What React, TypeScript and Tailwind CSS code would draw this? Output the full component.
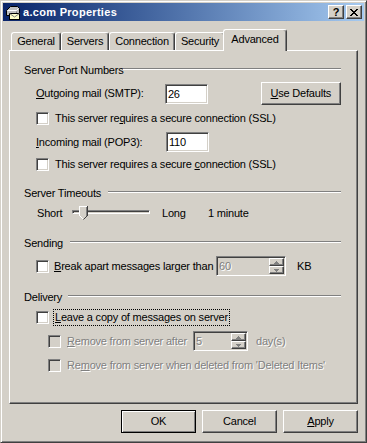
import React from 'react';

const raised =
  'border border-t-white border-l-white border-r-[#404040] border-b-[#404040] shadow-[inset_-1px_-1px_#808080]';
const sunken =
  'border border-t-[#808080] border-l-[#808080] border-r-white border-b-white shadow-[inset_1px_1px_#404040,inset_-1px_-1px_#d4d0c8]';
const grayText = 'text-[#808080] [text-shadow:1px_1px_0_#fff]';

function Key({ children }: { children: React.ReactNode }) {
  return <span className="underline underline-offset-[1px]">{children}</span>;
}

function MailIcon() {
  return (
    <svg width="16" height="16" viewBox="0 0 16 16" className="shrink-0">
      <path d="M1.5 6.5 L5.5 2.5 H12.5 L14.5 4.5 V9.5 L11.5 11.5 H1.5 Z" fill="#c0c0c0" stroke="#000" />
      <path d="M2.5 6.5 H11.5 L13.5 4.5" fill="none" stroke="#fff" />
      <path d="M11.5 7.5 V10.5" fill="none" stroke="#808080" />
      <rect x="4.5" y="9.5" width="10" height="6" fill="#ffffc8" stroke="#000" />
      <path d="M4.5 9.5 L9.5 13 L14.5 9.5" fill="none" stroke="#808080" />
    </svg>
  );
}

function TitleBtn({ children }: { children: React.ReactNode }) {
  return (
    <div className={`w-[16px] h-[14px] bg-[#d4d0c8] flex items-center justify-center ${raised}`}>
      {children}
    </div>
  );
}

function Check({ disabled }: { disabled?: boolean }) {
  return (
    <span
      className={`block w-[13px] h-[13px] shrink-0 ${sunken} ${disabled ? 'bg-[#d4d0c8]' : 'bg-white'}`}
    />
  );
}

function Edit({ value, className = '' }: { value: string; className?: string }) {
  return (
    <div className={`w-[43px] h-[20px] bg-white pl-[2px] flex items-center ${sunken} ${className}`}>
      {value}
    </div>
  );
}

function SpinBtn({ up }: { up?: boolean }) {
  return (
    <div className={`flex-1 bg-[#d4d0c8] flex items-center justify-center ${raised}`}>
      <svg width="5" height="3" viewBox="0 0 5 3" shapeRendering="crispEdges">
        {up ? (
          <>
            <rect x="2" y="0" width="1" height="1" fill="#808080" />
            <rect x="1" y="1" width="3" height="1" fill="#808080" />
            <rect x="0" y="2" width="5" height="1" fill="#808080" />
          </>
        ) : (
          <>
            <rect x="0" y="0" width="5" height="1" fill="#808080" />
            <rect x="1" y="1" width="3" height="1" fill="#808080" />
            <rect x="2" y="2" width="1" height="1" fill="#808080" />
          </>
        )}
      </svg>
    </div>
  );
}

function Spin({ value, w }: { value: string; w: string }) {
  return (
    <div className={`${w} h-[20px] flex bg-[#d4d0c8] p-[1px] ${sunken}`}>
      <span className={`flex-1 pl-[1px] flex items-center ${grayText}`}>{value}</span>
      <div className="w-[15px] flex flex-col">
        <SpinBtn up />
        <SpinBtn />
      </div>
    </div>
  );
}

function Group({ label, w }: { label: string; w: string }) {
  return (
    <div className="flex items-center h-[14px]">
      <span className={`${w} shrink-0 whitespace-nowrap`}>{label}</span>
      <div className="flex-1 h-[2px] mb-[2px] border-t border-t-[#808080] border-b border-b-white" />
    </div>
  );
}

function Tab({ label, w, active }: { label: string; w: string; active?: boolean }) {
  if (active) {
    return (
      <div
        className={`${w} h-[22px] -mb-[1px] -ml-[2px] relative z-10 bg-[#d4d0c8] border-t border-l border-r border-t-white border-l-white border-r-[#404040] shadow-[inset_-1px_0_#808080] rounded-t-[3px] flex items-center justify-center pb-[3px]`}
      >
        {label}
      </div>
    );
  }
  return (
    <div
      className={`${w} h-[18px] bg-[#d4d0c8] border-t border-l border-r border-t-white border-l-white border-r-[#404040] shadow-[inset_-1px_0_#808080] rounded-t-[3px] flex items-center justify-center`}
    >
      {label}
    </div>
  );
}

function Button({ children, primary }: { children: React.ReactNode; primary?: boolean }) {
  return (
    <div
      className={`w-[75px] h-[23px] bg-[#d4d0c8] flex items-center justify-center ${
        primary ? 'border border-black shadow-[inset_1px_1px_#fff,inset_-1px_-1px_#808080]' : raised
      }`}
    >
      {children}
    </div>
  );
}

export default function App() {
  return (
    <div className="w-[367px] h-[443px] bg-[#d4d0c8] border border-t-[#d4d0c8] border-l-[#d4d0c8] border-r-[#404040] border-b-[#404040] shadow-[inset_1px_1px_#fff,inset_-1px_-1px_#808080] p-[2px] flex flex-col font-['Liberation_Sans',Arial,sans-serif] text-[11px] leading-[13px] tracking-[-0.2px] text-black select-none">
      {/* Title bar */}
      <div className="h-[18px] shrink-0 flex items-center bg-linear-to-r from-[#0a246a] to-[#a6caf0] pl-[2px] pr-[2px]">
        <MailIcon />
        <span className="ml-[2px] text-white font-bold tracking-[0.3px]">a.com Properties</span>
        <div className="ml-auto flex gap-[2px]">
          <TitleBtn>
            <span className="font-bold text-[11px] leading-none tracking-normal">?</span>
          </TitleBtn>
          <TitleBtn>
            <svg width="8" height="7" viewBox="0 0 8 7" shapeRendering="crispEdges">
              <path d="M0 0h2v1h-2zM6 0h2v1h-2zM1 1h2v1h-2zM5 1h2v1h-2zM2 2h4v1h-4zM3 3h2v1h-2zM2 4h4v1h-4zM1 5h2v1h-2zM5 5h2v1h-2zM0 6h2v1h-2zM6 6h2v1h-2z" fill="#000" />
            </svg>
          </TitleBtn>
        </div>
      </div>

      <div className="mt-[8px] mx-[6px] flex flex-col">
        {/* Tabs */}
        <div className="h-[21px] pl-[2px] flex items-end">
          <Tab label="General" w="w-[50px]" />
          <Tab label="Servers" w="w-[48px]" />
          <Tab label="Connection" w="w-[66px]" />
          <Tab label="Security" w="w-[50px]" />
          <Tab label="Advanced" w="w-[64px]" active />
        </div>

        {/* Panel */}
        <div
          className={`h-[354px] border border-t-white border-l-white border-r-[#404040] border-b-[#404040] shadow-[inset_-1px_-1px_#808080] pt-[12px] pl-[14px] pr-[16px] flex flex-col`}
        >
          <Group label="Server Port Numbers" w="w-[99px]" />

          <div className="mt-[5px] ml-[12px] flex items-start h-[23px]">
            <span className="w-[130px] h-[23px] flex items-center">
              <Key>O</Key>utgoing mail (SMTP):
            </span>
            <Edit value="26" className="mt-[2px]" />
            <div className={`ml-[53px] w-[81px] h-[23px] flex items-center justify-center bg-[#d4d0c8] ${raised}`}>
              <Key>U</Key>se Defaults
            </div>
          </div>

          <div className="mt-[7px] ml-[12px] flex items-center h-[13px] gap-[6px]">
            <Check />
            <span>
              This server re<Key>q</Key>uires a secure connection (SSL)
            </span>
          </div>

          <div className="mt-[7px] ml-[12px] flex items-center h-[20px]">
            <span className="w-[130px]">
              <Key>I</Key>ncoming mail (POP3):
            </span>
            <Edit value="110" />
          </div>

          <div className="mt-[6px] ml-[12px] flex items-center h-[13px] gap-[6px]">
            <Check />
            <span>
              This server requires a secure <Key>c</Key>onnection (SSL)
            </span>
          </div>

          <div className="mt-[15px]">
            <Group label="Server Timeouts" w="w-[84px]" />
          </div>

          <div className="mt-[4px] ml-[12px] flex items-center h-[18px]">
            <span className="w-[36px] pl-[1px]">Short</span>
            <div className="relative w-[78px] h-[18px]">
              <div className={`absolute left-0 right-0 top-[6px] h-[4px] ${sunken} bg-[#d4d0c8]`} />
              <svg
                className="absolute left-[7px] top-[2px]"
                width="9"
                height="14"
                viewBox="0 0 9 14"
                shapeRendering="crispEdges"
              >
                <path d="M0 0 H9 V10 L4.5 14 L0 10 Z" fill="#d4d0c8" />
                <path d="M0.5 10 V0.5 H7.5" fill="none" stroke="#fff" />
                <path d="M8.5 0 V9.5" fill="none" stroke="#404040" />
                <path d="M7.5 1 V9.5" fill="none" stroke="#808080" />
                <path d="M8.5 9.5 L4.5 13.5" fill="none" stroke="#404040" shapeRendering="auto" />
                <path d="M0.5 9.5 L4 13" fill="none" stroke="#fff" shapeRendering="auto" />
              </svg>
            </div>
            <span className="ml-[12px] w-[46px]">Long</span>
            <span>1 minute</span>
          </div>

          <div className="mt-[14px]">
            <Group label="Sending" w="w-[46px]" />
          </div>

          <div className="mt-[6px] ml-[12px] flex items-center h-[20px]">
            <Check />
            <span className="ml-[5px] w-[162px] whitespace-nowrap">
              <Key>B</Key>reak apart messages larger than
            </span>
            <Spin value="60" w="w-[70px]" />
            <span className="ml-[11px]">KB</span>
          </div>

          <div className="mt-[14px]">
            <Group label="Delivery" w="w-[44px]" />
          </div>

          <div className="mt-[5px] ml-[12px] flex items-center h-[17px]">
            <Check />
            <span className="ml-[4px] h-[17px] px-[1px] border border-dotted border-black flex items-center whitespace-nowrap">
              <Key>L</Key>eave a copy of messages on server
            </span>
          </div>

          <div className="mt-[5px] ml-[24px] flex items-center h-[20px]">
            <Check disabled />
            <span className={`ml-[6px] w-[126px] whitespace-nowrap ${grayText}`}>
              <Key>R</Key>emove from server after
            </span>
            <Spin value="5" w="w-[55px]" />
            <span className={`ml-[8px] ${grayText}`}>day(s)</span>
          </div>

          <div className="mt-[7px] ml-[24px] flex items-center h-[15px]">
            <Check disabled />
            <span className={`ml-[6px] whitespace-nowrap ${grayText}`}>
              Re<Key>m</Key>ove from server when deleted from 'Deleted Items'
            </span>
          </div>
        </div>
      </div>

      {/* Dialog buttons */}
      <div className="mt-[6px] mr-[6px] flex justify-end gap-[6px]">
        <Button primary>OK</Button>
        <Button>Cancel</Button>
        <Button>
          <span>
            <Key>A</Key>pply
          </span>
        </Button>
      </div>
    </div>
  );
}
